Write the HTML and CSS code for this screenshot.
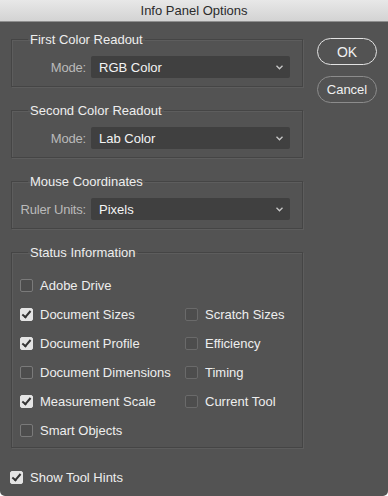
FILE: index.html
```html
<!DOCTYPE html>
<html lang="en">

<head>
    <meta charset="UTF-8" />
    <title>Info Panel Options</title>
    <link rel="stylesheet" href="styles.css">
</head>

<body>
    <div class="window">
        <div class="titlebar">Info Panel Options</div>

        <div class="main">
            <div class="groups">
                <fieldset class="group">
                    <legend>First Color Readout</legend>
                    <div class="field">
                        <label>Mode:</label>
                        <div class="select"><span>RGB Color</span>
                            <svg width="7" height="5" viewBox="0 0 7 5"><polyline points="0.5,0.8 3.5,3.8 6.5,0.8" /></svg>
                        </div>
                    </div>
                </fieldset>

                <fieldset class="group">
                    <legend>Second Color Readout</legend>
                    <div class="field">
                        <label>Mode:</label>
                        <div class="select"><span>Lab Color</span>
                            <svg width="7" height="5" viewBox="0 0 7 5"><polyline points="0.5,0.8 3.5,3.8 6.5,0.8" /></svg>
                        </div>
                    </div>
                </fieldset>

                <fieldset class="group">
                    <legend>Mouse Coordinates</legend>
                    <div class="field">
                        <label>Ruler Units:</label>
                        <div class="select"><span>Pixels</span>
                            <svg width="7" height="5" viewBox="0 0 7 5"><polyline points="0.5,0.8 3.5,3.8 6.5,0.8" /></svg>
                        </div>
                    </div>
                </fieldset>

                <fieldset class="group status">
                    <legend>Status Information</legend>
                    <div class="checks">
                        <div class="check"><span class="box"></span>Adobe Drive</div>
                        <div></div>
                        <div class="check"><span class="box on"></span>Document Sizes</div>
                        <div class="check"><span class="box dim"></span>Scratch Sizes</div>
                        <div class="check"><span class="box on"></span>Document Profile</div>
                        <div class="check"><span class="box dim"></span>Efficiency</div>
                        <div class="check"><span class="box"></span>Document Dimensions</div>
                        <div class="check"><span class="box dim"></span>Timing</div>
                        <div class="check"><span class="box on"></span>Measurement Scale</div>
                        <div class="check"><span class="box dim"></span>Current Tool</div>
                        <div class="check"><span class="box"></span>Smart Objects</div>
                    </div>
                </fieldset>
            </div>

            <div class="buttons">
                <button class="btn default">OK</button>
                <button class="btn">Cancel</button>
            </div>
        </div>

        <div class="check hints"><span class="box on"></span>Show Tool Hints</div>
    </div>
</body>

</html>
```

FILE: styles.css
```css
html {
    background: #ffffff;
}

body {
    margin: 0;
    font-family: "Liberation Sans", Arial, sans-serif;
    font-size: 13px;
    color: #ececec;
}

.window {
    width: 388px;
    height: 496px;
    overflow: hidden;
    background: #535353;
    border-radius: 0 0 5px 5px;
}

.titlebar {
    height: 21px;
    line-height: 22px;
    text-align: center;
    color: #2b2b2b;
    background: linear-gradient(#e8e8e8, #d3d3d3);
    border-bottom: 1px solid #8e8e8e;
}

.main {
    display: flex;
    padding: 10px 0 0 11px;
}

.groups {
    width: 292px;
}

.group {
    margin: 0 0 16px;
    padding: 0 8px 8px 8px;
    border: 1px solid #454545;
    box-shadow: 1px 1px 0 #5d5d5d, inset 1px 1px 0 #5d5d5d;
    min-width: 0;
}

.group legend {
    margin-left: 8px;
    padding: 0 2px;
    line-height: 15px;
    color: #eeeeee;
}

.field {
    display: flex;
    align-items: center;
    margin-top: 9px;
}

.field label {
    flex: none;
    width: 66px;
    margin-right: 5px;
    display: flex;
    justify-content: flex-end;
    white-space: nowrap;
    letter-spacing: -0.2px;
    color: #bababa;
}

.select {
    width: 199px;
    height: 22px;
    box-sizing: border-box;
    padding: 0 7px 0 8px;
    display: flex;
    align-items: center;
    justify-content: space-between;
    background: #404040;
    border-radius: 2px;
    color: #f4f4f4;
}

.select svg polyline {
    fill: none;
    stroke: #c8c8c8;
    stroke-width: 1.3;
}

.status {
    margin-bottom: 0;
    padding-bottom: 2px;
}

.checks {
    display: grid;
    grid-template-columns: 165px 1fr;
    grid-auto-rows: 29px;
    margin-top: 11px;
}

.check {
    display: flex;
    align-items: center;
    gap: 7px;
    color: #eeeeee;
}

.box {
    width: 11px;
    height: 11px;
    border: 1px solid #7a7a7a;
    border-radius: 2px;
    background: #4d4d4d;
    position: relative;
}

.box.dim {
    border-color: #6a6a6a;
}

.box.on {
    background: #e4e4e4;
    border-color: #e4e4e4;
}

.box.on::after {
    content: "";
    position: absolute;
    left: 3px;
    top: 0px;
    width: 3px;
    height: 7px;
    border: solid #333333;
    border-width: 0 2px 2px 0;
    transform: rotate(40deg);
}

.hints {
    margin: 17px 0 0 10px;
    height: 24px;
}

.buttons {
    display: flex;
    flex-direction: column;
    gap: 11px;
    margin: 6px 11px 0 auto;
}

.btn {
    width: 60px;
    height: 27px;
    border-radius: 14px;
    border: 1px solid #8c8c8c;
    background: #535353;
    color: #f0f0f0;
    font-family: "Liberation Sans", Arial, sans-serif;
    font-size: 13px;
    padding: 0;
}

.btn.default {
    border-color: #e2e2e2;
    font-size: 14px;
}
```
